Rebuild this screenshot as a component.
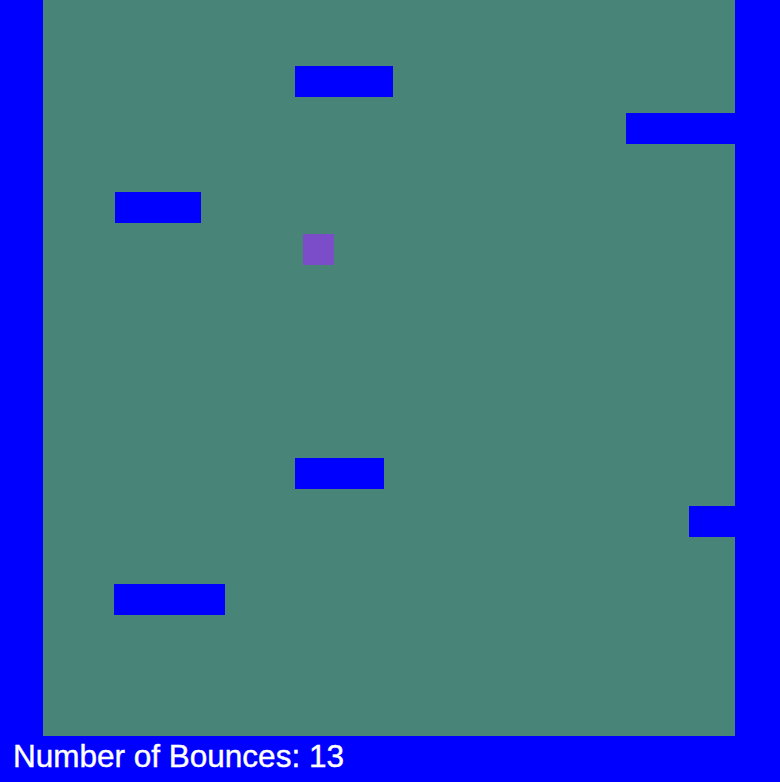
const platforms = [
  { x: 252, y: 66, w: 98, h: 31 },
  { x: 583, y: 113, w: 109, h: 31 },
  { x: 72, y: 192, w: 86, h: 31 },
  { x: 252, y: 458, w: 89, h: 31 },
  { x: 646, y: 506, w: 46, h: 31 },
  { x: 71, y: 584, w: 111, h: 31 },
];

// ball position inside the field
const ball = { x: 260, y: 234, size: 31 };

const App = () => {
  return (
    <div className="min-h-screen w-full bg-[#0000ff] font-['Liberation_Sans',Arial,sans-serif]">
      <div className="ml-[43px] w-[692px] h-[736px] bg-[#488477] relative">
        {platforms.map((p, i) => (
          <div
            key={i}
            className="absolute bg-[#0000ff]"
            style={{ left: p.x, top: p.y, width: p.w, height: p.h }}
          />
        ))}
        <div
          className="absolute bg-[#7c4dc8]"
          style={{ left: ball.x, top: ball.y, width: ball.size, height: ball.size }}
        />
      </div>
      <p className="mt-[2px] pl-[13px] text-white text-[31.5px] leading-[36px] [-webkit-text-stroke:0.4px_white]">
        Number of Bounces: 13
      </p>
    </div>
  );
};

export default App;
